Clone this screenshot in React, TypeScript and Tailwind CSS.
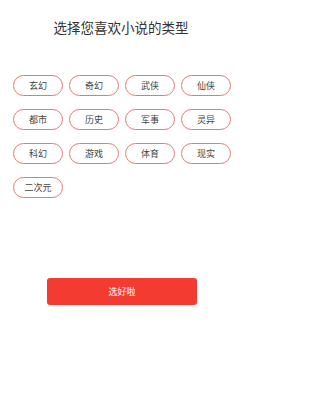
const genres = [
  "玄幻",
  "奇幻",
  "武侠",
  "仙侠",
  "都市",
  "历史",
  "军事",
  "灵异",
  "科幻",
  "游戏",
  "体育",
  "现实",
  "二次元",
];

export default function App() {
  return (
    <div
      className="w-[240px] h-[398px] bg-white flex flex-col"
      style={{ fontFamily: '"Noto Sans CJK SC", "Noto Sans", sans-serif' }}
    >
      <h1 className="mt-[17px] pl-[2px] text-center text-[13.5px] leading-[20px] text-[#333333]">
        选择您喜欢小说的类型
      </h1>

      <div className="mt-[38px] pl-[13px] grid grid-cols-[repeat(4,50px)] gap-x-[6px] gap-y-[13px]">
        {genres.map((g) => (
          <div
            key={g}
            className="h-[21px] rounded-full border border-[#de7b76] flex items-center justify-center text-[9px] text-[#444444]"
          >
            {g}
          </div>
        ))}
      </div>

      <div className="mt-[78px] pl-[47px]">
        <button className="w-[150px] h-[27px] rounded-[3px] bg-[#f43b31] text-white text-[9px]">
          选好啦
        </button>
      </div>
    </div>
  );
}
